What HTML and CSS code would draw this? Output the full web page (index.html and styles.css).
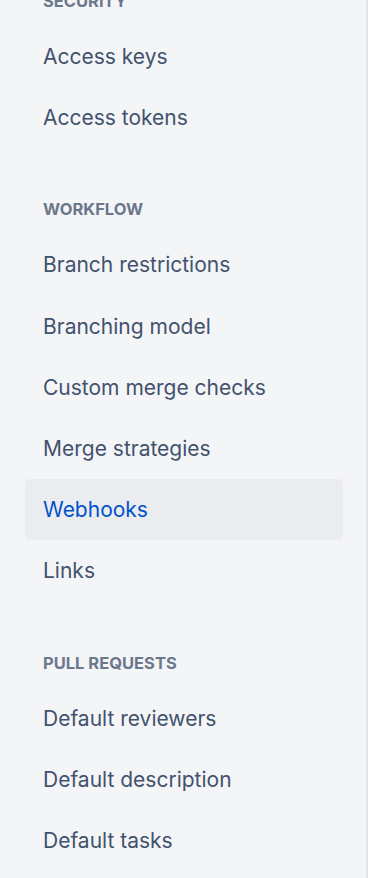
FILE: index.html
```html
<!DOCTYPE html>
<html lang="en">
	<head>
		<meta charset="UTF-8">
		<title>Repository settings</title>
		<link rel="stylesheet" href="styles.css">
	</head>
	<body>
		<div class="layout">
			<nav class="sidebar">
				<div class="section first">
					<h2 class="heading">Security</h2>
					<a class="item" href="#">Access keys</a>
					<a class="item" href="#">Access tokens</a>
				</div>
				<div class="section">
					<h2 class="heading">Workflow</h2>
					<a class="item" href="#">Branch restrictions</a>
					<a class="item" href="#">Branching model</a>
					<a class="item" href="#">Custom merge checks</a>
					<a class="item" href="#">Merge strategies</a>
					<a class="item selected" href="#">Webhooks</a>
					<a class="item" href="#">Links</a>
				</div>
				<div class="section">
					<h2 class="heading">Pull requests</h2>
					<a class="item" href="#">Default reviewers</a>
					<a class="item" href="#">Default description</a>
					<a class="item" href="#">Default tasks</a>
				</div>
			</nav>
			<main class="content"></main>
		</div>
	</body>
</html>
```

FILE: styles.css
```css
html, body {
	margin: 0;
	height: 100%;
	overflow: hidden;
}
body {
	background: #ffffff;
	font-family: "Inter", "Liberation Sans", sans-serif;
}
.layout {
	display: flex;
	height: 100%;
}
.sidebar {
	flex: none;
	width: 318px;
	padding: 0 23px 0 25px;
	background: #f4f5f7; /* N10 */
	border-right: 2px solid #e2e4e9;
	overflow: hidden;
}
.content {
	flex: 1;
}
.section {
	display: flex;
	flex-direction: column;
}
/* page is scrolled: the first heading is half hidden */
.section.first {
	margin-top: -60px;
}
.heading {
	margin: 0 0 13px 0;
	padding: 49px 0 0 18px;
	line-height: 24px;
	font-size: 16.5px;
	font-weight: 700;
	text-transform: uppercase;
	color: #6b778c;
}
.item {
	display: flex;
	align-items: center;
	height: 61.2px;
	padding-left: 18px;
	border-radius: 5px;
	font-size: 21px;
	color: #42526e;
	text-decoration: none;
}
.item.selected {
	background: #ebecf0;
	color: #0052cc;
}
```
